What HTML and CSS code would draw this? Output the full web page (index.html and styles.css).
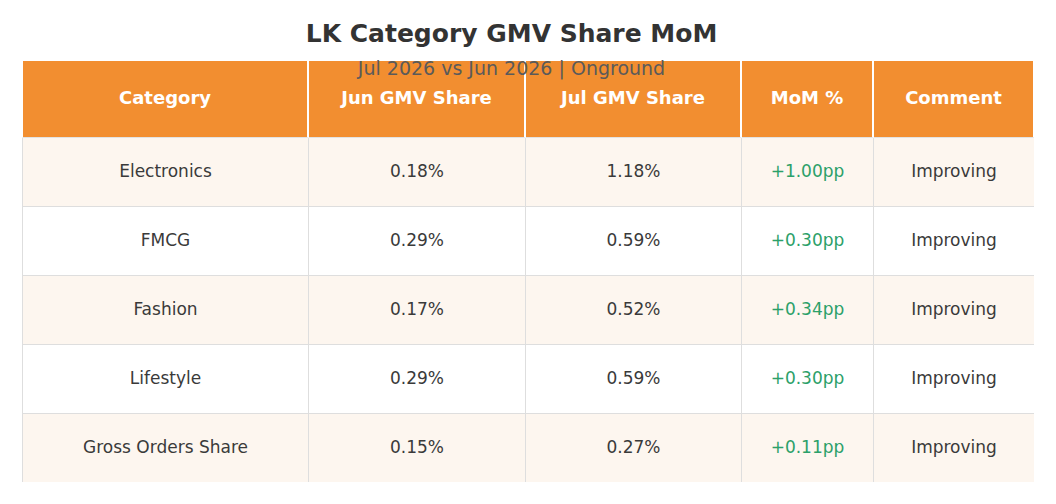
FILE: index.html
```html
<!DOCTYPE html>
<html lang="en">
<head>
<meta charset="utf-8">
<title>LK Category GMV Share MoM</title>
<link rel="stylesheet" href="styles.css">
</head>
<body>
<div class="page">
  <h1 class="title">LK Category GMV Share MoM</h1>
  <div class="subtitle">Jul 2026 vs Jun 2026 | Onground</div>
  <div class="table-wrap">
    <table class="grid">
      <colgroup>
        <col class="c1"><col class="c2"><col class="c3"><col class="c4"><col class="c5">
      </colgroup>
      <thead>
        <tr>
          <th>Category</th>
          <th>Jun GMV Share</th>
          <th>Jul GMV Share</th>
          <th>MoM %</th>
          <th>Comment</th>
        </tr>
      </thead>
      <tbody>
        <tr class="alt">
          <td>Electronics</td><td>0.18%</td><td>1.18%</td><td class="up">+1.00pp</td><td>Improving</td>
        </tr>
        <tr>
          <td>FMCG</td><td>0.29%</td><td>0.59%</td><td class="up">+0.30pp</td><td>Improving</td>
        </tr>
        <tr class="alt">
          <td>Fashion</td><td>0.17%</td><td>0.52%</td><td class="up">+0.34pp</td><td>Improving</td>
        </tr>
        <tr>
          <td>Lifestyle</td><td>0.29%</td><td>0.59%</td><td class="up">+0.30pp</td><td>Improving</td>
        </tr>
        <tr class="alt">
          <td>Gross Orders Share</td><td>0.15%</td><td>0.27%</td><td class="up">+0.11pp</td><td>Improving</td>
        </tr>
      </tbody>
    </table>
  </div>
</div>
</body>
</html>
```

FILE: styles.css
```css
html, body {
  margin: 0;
  padding: 0;
  background: #ffffff;
}

body {
  font-family: "DejaVu Sans", sans-serif;
  color: #333333;
}

.page {
  position: relative;
  width: 1056px;
  height: 504px;
  overflow: hidden;
}

.title {
  width: 1023px;
  margin: 0;
  padding-top: 19px;
  font-size: 25px;
  line-height: 30px;
  font-weight: bold;
  text-align: center;
  color: #333333;
}

.subtitle {
  position: absolute;
  top: 57px;
  left: 0;
  width: 1023px;
  font-size: 19px;
  line-height: 22px;
  text-align: center;
  color: #5a5a5a;
  z-index: 2;
}

.table-wrap {
  margin-top: 12px;
  margin-left: 22px;
  width: 1012px;
  height: 421px;
  overflow: hidden;
}

.grid {
  border-collapse: separate;
  border-spacing: 0;
  table-layout: fixed;
  width: 1013px;
}

.c1 { width: 287px; }
.c2 { width: 217px; }
.c3 { width: 216px; }
.c4 { width: 132px; }
.c5 { width: 161px; }

.grid th {
  box-sizing: border-box;
  height: 77px;
  padding: 0 0 3px 0;
  background: #f28e30;
  color: #ffffff;
  font-size: 18px;
  font-weight: bold;
  text-align: center;
  vertical-align: middle;
  border-right: 2px solid #ffffff;
  border-bottom: 1px solid #e2e2e2;
}

.grid th:first-child {
  border-left: 1px solid #ffffff;
}

.grid td {
  box-sizing: border-box;
  height: 69px;
  padding: 0 0 2px 0;
  font-size: 17px;
  text-align: center;
  vertical-align: middle;
  color: #3a3a3a;
  border-right: 1px solid #dedede;
  border-bottom: 1px solid #dedede;
}

.grid td:first-child {
  border-left: 1px solid #dedede;
}

.grid tr.alt td {
  background: #fdf6ef;
}

.grid td.up {
  color: #2ca069;
}
```
